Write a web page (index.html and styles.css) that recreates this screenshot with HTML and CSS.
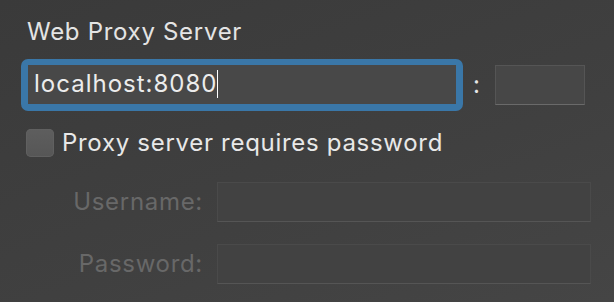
FILE: index.html
```html
<!DOCTYPE html>
<html lang="en">
<head>
<meta charset="UTF-8">
<meta name="viewport" content="width=device-width, initial-scale=1.0">
<title>Web Proxy Server</title>
<link rel="stylesheet" href="styles.css">
</head>
<body>

<div id="panel">
    <h2 class="title">Web Proxy Server</h2>

    <div class="server-row">
        <div class="focus-ring">
            <div class="field host-field">localhost:8080<span class="caret"></span></div>
        </div>
        <span class="colon">:</span>
        <div class="field port-field"></div>
    </div>

    <label class="check-row">
        <span class="checkbox"></span>
        <span class="check-label">Proxy server requires password</span>
    </label>

    <div class="auth-grid">
        <span class="auth-label">Username:</span>
        <div class="field disabled-field"></div>
        <span class="auth-label">Password:</span>
        <div class="field disabled-field"></div>
    </div>
</div>

</body>
</html>
```

FILE: styles.css
```css
body {
    margin: 0;
    width: 614px;
    height: 302px;
    overflow: hidden;
    font-family: 'Inter', 'Noto Sans', sans-serif;
    font-size: 24px;
    letter-spacing: 0.7px;
    color: #e6e6e6;
    background: linear-gradient(160deg, #3a3a3a 0%, #404040 60%, #454545 100%);
}

#panel {
    padding: 17px 0 0 21px;
}

.title {
    margin: 0 0 12px 6px;
    font-size: 24px;
    font-weight: 400;
    line-height: 30px;
    color: #e4e4e4;
}

.server-row {
    display: flex;
    align-items: center;
}

.focus-ring {
    border: solid #3a77a8;
    border-width: 6px 7px 7px 7px;
    border-radius: 7px;
}

.field {
    box-sizing: border-box;
    background-color: #474747;
    border: 1px solid #555;
    border-bottom-color: #6a6a6a;
}

.host-field {
    width: 428px;
    height: 39px;
    padding-left: 6px;
    line-height: 37px;
    letter-spacing: 1px;
    color: #ececec;
    background-color: #484848;
    border: none;
}

.caret {
    display: inline-block;
    width: 1px;
    height: 28px;
    vertical-align: -6px;
    background-color: #fff;
}

.colon {
    margin: 0 14px 0 10px;
    line-height: 30px;
    color: #e6e6e6;
}

.port-field {
    width: 90px;
    height: 40px;
}

.check-row {
    display: flex;
    align-items: center;
    gap: 8px;
    margin: 17px 0 0 5px;
}

.checkbox {
    width: 28px;
    height: 28px;
    border-radius: 5px;
    background: linear-gradient(#5e5e5e, #565656);
    box-shadow: inset 0 0 0 1px #606060;
}

.check-label {
    line-height: 30px;
    color: #e8e8e8;
}

.auth-grid {
    display: grid;
    grid-template-columns: 182px 374px;
    column-gap: 14px;
    row-gap: 22px;
    align-items: center;
    margin-top: 24px;
}

.auth-label {
    text-align: right;
    line-height: 30px;
    color: #686868;
}

.disabled-field {
    height: 40px;
    background-color: #424242;
    border-color: #4a4a4a;
    border-bottom-color: #555;
}
```
